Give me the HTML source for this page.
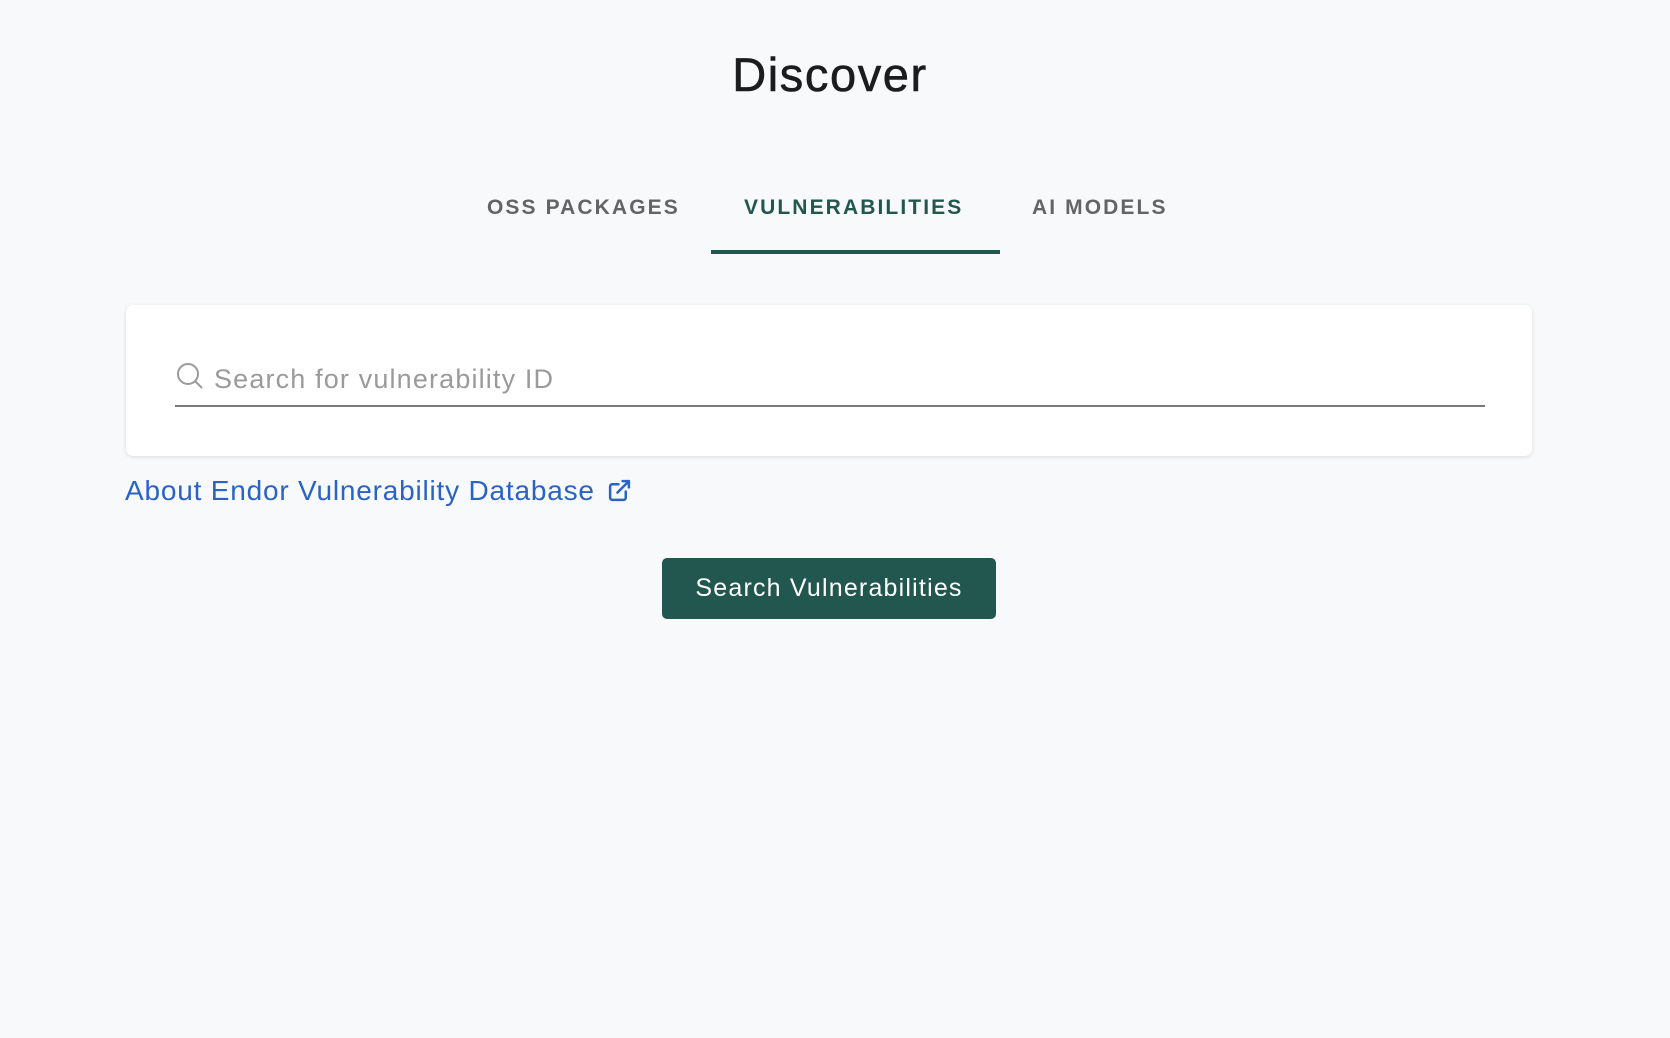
<!DOCTYPE html>
<html><head><meta charset="utf-8"><style>
html,body{margin:0;padding:0;width:1670px;height:1038px;background:#f7f9fb;font-family:"Liberation Sans",sans-serif;overflow:hidden}
h1{position:absolute;left:0;width:1660px;top:47px;margin:0;text-align:center;font-weight:normal;font-size:47px;letter-spacing:1.6px;color:#1c1c1c;-webkit-text-stroke:0.6px #1c1c1c}
.tab{position:absolute;top:196px;font-size:21px;letter-spacing:2.1px;color:#646464;font-weight:600}
.ul{position:absolute;left:711px;top:250px;width:289px;height:4px;background:#225750}
.card{position:absolute;left:126px;top:305px;width:1406px;height:151px;background:#fff;border-radius:7px;box-shadow:0 1px 4px rgba(0,0,0,.12)}
.line{position:absolute;left:49px;top:100px;width:1310px;height:2px;background:#7a7a7a}
.ph{position:absolute;left:88px;top:59px;font-size:27px;letter-spacing:1.15px;color:#9a9a9a}
.link{position:absolute;left:125px;top:475px;font-size:28px;letter-spacing:0.8px;color:#2b63c4}
.btn{position:absolute;left:662px;top:558px;width:334px;height:61px;background:#225750;border-radius:5px;color:#fff;font-size:25px;letter-spacing:1.2px;text-align:center;line-height:61px}
</style></head><body>
<h1>Discover</h1>
<div class="tab" style="left:487px">OSS PACKAGES</div>
<div class="tab" style="left:744px;color:#225750">VULNERABILITIES</div>
<div class="tab" style="left:1032px">AI MODELS</div>
<div class="ul"></div>
<div class="card">
<svg style="position:absolute;left:50px;top:57px" width="28" height="28" viewBox="0 0 28 28" fill="none" stroke="#9a9a9a" stroke-width="2"><circle cx="12" cy="12" r="10"/><path d="M19 19l7 7"/></svg>
<div class="ph">Search for vulnerability ID</div>
<div class="line"></div>
</div>
<div class="link">About Endor Vulnerability Database <svg style="vertical-align:-3px;margin-left:4px" width="25" height="25" viewBox="0 0 24 24" fill="none" stroke="#2b63c4" stroke-width="2.4" stroke-linecap="round" stroke-linejoin="round"><path d="M18 13v6a2 2 0 0 1-2 2H5a2 2 0 0 1-2-2V8a2 2 0 0 1 2-2h6"/><path d="M15 3h6v6"/><path d="M10 14L21 3"/></svg></div>
<div class="btn">Search Vulnerabilities</div>
</body></html>
